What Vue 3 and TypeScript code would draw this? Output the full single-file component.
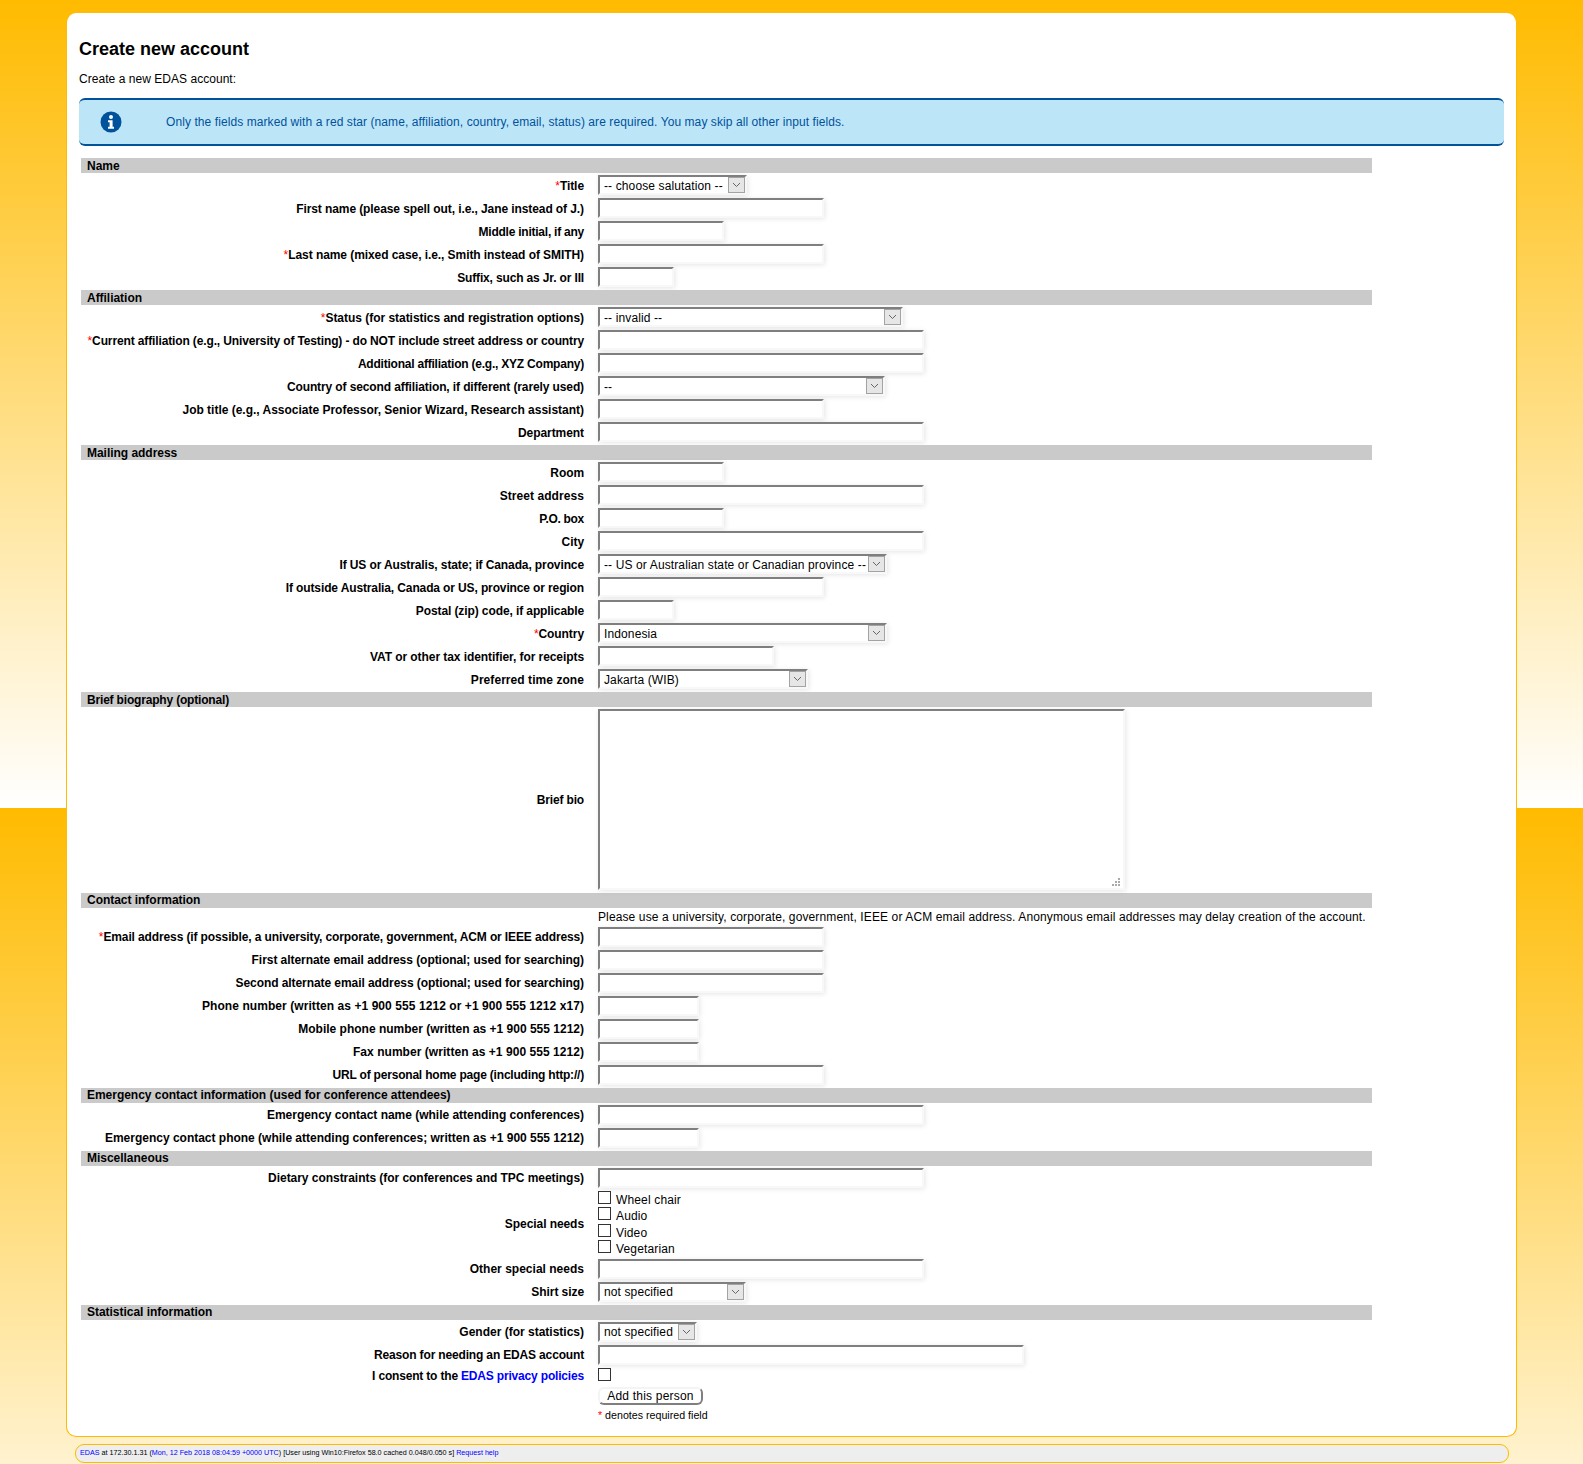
<script setup lang="ts">
type Row =
  | { kind: 'bar'; label: string; ls?: number }
  | { kind: 'input'; label: string; w: number; req?: boolean; ls?: number }
  | { kind: 'select'; label: string; w: number; value: string; req?: boolean; ls?: number }
  | { kind: 'bio'; label: string; ls?: number }
  | { kind: 'note'; text: string }
  | { kind: 'needs'; label: string; options: string[] }
  | { kind: 'consent' }
  | { kind: 'submit' }

const rows: Row[] = [
  { kind: 'bar', label: 'Name' },
  { kind: 'select', label: 'Title', w: 149, value: '-- choose salutation --', req: true },
  { kind: 'input', label: 'First name (please spell out, i.e., Jane instead of J.)', w: 226, ls: -0.09 },
  { kind: 'input', label: 'Middle initial, if any', w: 126, ls: -0.24 },
  { kind: 'input', label: 'Last name (mixed case, i.e., Smith instead of SMITH)', w: 226, req: true },
  { kind: 'input', label: 'Suffix, such as Jr. or III', w: 76, ls: -0.15 },
  { kind: 'bar', label: 'Affiliation' },
  { kind: 'select', label: 'Status (for statistics and registration options)', w: 305, value: '-- invalid --', req: true, ls: -0.03 },
  { kind: 'input', label: 'Current affiliation (e.g., University of Testing) - do NOT include street address or country', w: 326, req: true, ls: -0.13 },
  { kind: 'input', label: 'Additional affiliation (e.g., XYZ Company)', w: 326, ls: -0.22 },
  { kind: 'select', label: 'Country of second affiliation, if different (rarely used)', w: 287, value: '--', ls: -0.11 },
  { kind: 'input', label: 'Job title (e.g., Associate Professor, Senior Wizard, Research assistant)', w: 226, ls: -0.01 },
  { kind: 'input', label: 'Department', w: 326 },
  { kind: 'bar', label: 'Mailing address' },
  { kind: 'input', label: 'Room', w: 126 },
  { kind: 'input', label: 'Street address', w: 326, ls: 0.07 },
  { kind: 'input', label: 'P.O. box', w: 126, ls: -0.3 },
  { kind: 'input', label: 'City', w: 326 },
  { kind: 'select', label: 'If US or Australis, state; if Canada, province', w: 289, value: '-- US or Australian state or Canadian province --', ls: -0.11 },
  { kind: 'input', label: 'If outside Australia, Canada or US, province or region', w: 226, ls: -0.125 },
  { kind: 'input', label: 'Postal (zip) code, if applicable', w: 76, ls: -0.1 },
  { kind: 'select', label: 'Country', w: 289, value: 'Indonesia', req: true },
  { kind: 'input', label: 'VAT or other tax identifier, for receipts', w: 176 },
  { kind: 'select', label: 'Preferred time zone', w: 210, value: 'Jakarta (WIB)', ls: 0.06 },
  { kind: 'bar', label: 'Brief biography (optional)', ls: -0.18 },
  { kind: 'bio', label: 'Brief bio', ls: -0.17 },
  { kind: 'bar', label: 'Contact information', ls: -0.03 },
  { kind: 'note', text: 'Please use a university, corporate, government, IEEE or ACM email address. Anonymous email addresses may delay creation of the account.' },
  { kind: 'input', label: 'Email address (if possible, a university, corporate, government, ACM or IEEE address)', w: 226, req: true, ls: -0.12 },
  { kind: 'input', label: 'First alternate email address (optional; used for searching)', w: 226, ls: -0.05 },
  { kind: 'input', label: 'Second alternate email address (optional; used for searching)', w: 226 },
  { kind: 'input', label: 'Phone number (written as +1 900 555 1212 or +1 900 555 1212 x17)', w: 101, ls: 0.07 },
  { kind: 'input', label: 'Mobile phone number (written as +1 900 555 1212)', w: 101, ls: 0 },
  { kind: 'input', label: 'Fax number (written as +1 900 555 1212)', w: 101, ls: 0.05 },
  { kind: 'input', label: 'URL of personal home page (including http://)', w: 226, ls: -0.2 },
  { kind: 'bar', label: 'Emergency contact information (used for conference attendees)' },
  { kind: 'input', label: 'Emergency contact name (while attending conferences)', w: 326, ls: -0.02 },
  { kind: 'input', label: 'Emergency contact phone (while attending conferences; written as +1 900 555 1212)', w: 101, ls: -0.01 },
  { kind: 'bar', label: 'Miscellaneous' },
  { kind: 'input', label: 'Dietary constraints (for conferences and TPC meetings)', w: 326, ls: -0.04 },
  { kind: 'needs', label: 'Special needs', options: ['Wheel chair', 'Audio', 'Video', 'Vegetarian'] },
  { kind: 'input', label: 'Other special needs', w: 326, ls: 0.01 },
  { kind: 'select', label: 'Shirt size', w: 148, value: 'not specified' },
  { kind: 'bar', label: 'Statistical information', ls: -0.03 },
  { kind: 'select', label: 'Gender (for statistics)', w: 99, value: 'not specified', ls: 0 },
  { kind: 'input', label: 'Reason for needing an EDAS account', w: 426, ls: -0.16 },
  { kind: 'consent' },
  { kind: 'submit' }
]

// The rows up to the biography bar sit one pixel lower in their line.
const lowUntil = rows.findIndex((r) => r.kind === 'bio')

const spacing = (ls?: number) => (ls === undefined ? undefined : { letterSpacing: ls + 'px' })
</script>

<template>
  <div class="page">
    <main class="card">
      <h1>Create new account</h1>
      <p class="intro">Create a new EDAS account:</p>
      <div class="alert">
        <svg class="alert-icon" width="22" height="22" viewBox="0 0 22 22">
          <circle cx="11" cy="11" r="10.5" fill="#00529b" />
          <circle cx="11" cy="6" r="2" fill="#fff" />
          <path d="M8 9.2h4.6v6.6H14v2H8v-2h1.6v-4.6H8z" fill="#fff" />
        </svg>
        <span>Only the fields marked with a red star (name, affiliation, country, email, status) are required. You may skip all other input fields.</span>
      </div>

      <form class="form" @submit.prevent>
        <template v-for="(row, i) in rows" :key="i">
          <div v-if="row.kind === 'bar'" class="bar" :class="{ low: i < lowUntil }" :style="spacing(row.ls)">{{ row.label }}</div>

          <div v-else-if="row.kind === 'input'" class="row" :class="{ low: i < lowUntil }">
            <label class="label" :style="spacing(row.ls)"><span v-if="row.req" class="star">*</span>{{ row.label }}</label>
            <div><input class="text" type="text" :style="{ width: row.w + 'px' }" /></div>
          </div>

          <div v-else-if="row.kind === 'select'" class="row" :class="{ low: i < lowUntil }">
            <label class="label" :style="spacing(row.ls)"><span v-if="row.req" class="star">*</span>{{ row.label }}</label>
            <div>
              <div class="select" :style="{ width: row.w + 'px' }">
                <span class="select-value">{{ row.value }}</span>
                <span class="select-arrow">
                  <svg width="9" height="6" viewBox="0 0 9 6"><path d="M1 1l3.5 3.5L8 1" fill="none" stroke="#666" stroke-width="1" /></svg>
                </span>
              </div>
            </div>
          </div>

          <div v-else-if="row.kind === 'bio'" class="row row-bio">
            <label class="label" :style="spacing(row.ls)">{{ row.label }}</label>
            <div class="bio-wrap">
              <textarea class="bio"></textarea>
              <svg class="grip" width="8" height="8" viewBox="0 0 8 8" fill="#aaa">
                <rect x="6" y="0" width="2" height="2" />
                <rect x="3" y="3" width="2" height="2" />
                <rect x="6" y="3" width="2" height="2" />
                <rect x="0" y="6" width="2" height="2" />
                <rect x="3" y="6" width="2" height="2" />
                <rect x="6" y="6" width="2" height="2" />
              </svg>
            </div>
          </div>

          <div v-else-if="row.kind === 'note'" class="row row-note">
            <span></span>
            <div class="note">{{ row.text }}</div>
          </div>

          <div v-else-if="row.kind === 'needs'" class="row row-needs">
            <label class="label">{{ row.label }}</label>
            <div class="needs">
              <label v-for="o in row.options" :key="o" class="need">
                <input class="check" type="checkbox" /><span>{{ o }}</span>
              </label>
            </div>
          </div>

          <div v-else-if="row.kind === 'consent'" class="row row-consent">
            <label class="label consent">I consent to the <a href="#">EDAS privacy policies</a></label>
            <div><input class="check" type="checkbox" /></div>
          </div>

          <div v-else class="row-submit">
            <button class="submit" type="submit">Add this person</button>
            <div class="legend"><span class="star">*</span> denotes required field</div>
          </div>
        </template>
      </form>
    </main>

    <footer class="foot">
      <a href="#">EDAS</a> at 172.30.1.31 (<a href="#">Mon, 12 Feb 2018 08:04:59 +0000 UTC</a>) [User using Win10:Firefox 58.0 cached 0.048/0.050 s] <a href="#">Request help</a>
    </footer>
  </div>
</template>

<style scoped>
.page {
  box-sizing: border-box;
  height: 1464px;
  padding-top: 12px;
  overflow: hidden;
  background-image: linear-gradient(#ffbb00, #ffffff);
  background-size: 100% 808px;
  background-repeat: repeat;
  font-family: "Liberation Sans", Arial, sans-serif;
  font-size: 12px;
  color: #000;
}
.card {
  box-sizing: border-box;
  width: 1451px;
  height: 1425px;
  margin-left: 66px;
  padding: 0 12px;
  background: #fff;
  border: 1px solid #ffbb00;
  border-top-color: transparent;
  border-radius: 10px;
  background-clip: padding-box;
}
h1 {
  margin: 26px 0 0;
  font-size: 18px;
  line-height: 21px;
  font-weight: bold;
}
.intro {
  margin: 12px 0 0;
  line-height: 14px;
  letter-spacing: 0.04px;
}
.alert {
  box-sizing: border-box;
  display: flex;
  align-items: center;
  height: 48px;
  margin-top: 12px;
  padding-left: 21px;
  background: #bde5f8;
  color: #00529b;
  border-top: 2px solid #00529b;
  border-bottom: 2px solid #00529b;
  border-radius: 6px;
  letter-spacing: 0.08px;
}
.alert-icon {
  flex: none;
  margin-right: 44px;
}
.form {
  display: flex;
  flex-direction: column;
  gap: 2px;
  width: 1291px;
  margin: 12px 0 0 2px;
}
.bar {
  height: 15px;
  line-height: 15px;
  padding-left: 6px;
  background: #cacaca;
  font-weight: bold;
  letter-spacing: -0.03px;
}
.bar.low {
  line-height: 17px;
}
.row {
  display: grid;
  grid-template-columns: 503px 1fr;
  column-gap: 14px;
  height: 21px;
  align-items: start;
}
.label {
  display: block;
  text-align: right;
  font-weight: bold;
  line-height: 21px;
  white-space: nowrap;
  letter-spacing: -0.07px;
}
.row.low .label {
  line-height: 23px;
}
.row.low .select-value {
  padding-top: 2px;
}
.label.consent {
  letter-spacing: -0.18px;
}
.star { color: #f00; font-weight: normal; }
a { color: #00f; text-decoration: none; }
.text,
.select,
.bio {
  box-sizing: border-box;
  border-width: 2px;
  border-style: solid;
  border-color: #7f7f7f #f8f8f8 #f8f8f8 #7f7f7f;
  box-shadow: 1px 1px 5px rgba(0, 0, 0, 0.1);
  background: #fff;
  outline: none;
  padding: 0;
  margin: 0;
}
.text {
  display: block;
  height: 20px;
}
.select {
  display: flex;
  height: 20px;
  align-items: center;
  justify-content: space-between;
  padding-left: 4px;
  line-height: 16px;
  white-space: nowrap;
  letter-spacing: 0.12px;
}
.select-arrow {
  box-sizing: border-box;
  flex: none;
  display: flex;
  align-items: center;
  justify-content: center;
  width: 17px;
  height: 16px;
  border: 1px solid #a3a3a3;
  background: #e6e6e6;
}
.row-bio {
  height: 182px;
}
.row-bio .label {
  line-height: 182px;
}
.bio-wrap {
  position: relative;
  width: 527px;
}
.bio {
  display: block;
  width: 527px;
  height: 181px;
  resize: none;
}
.grip {
  position: absolute;
  right: 5px;
  bottom: 4px;
}
.row-note {
  height: 15px;
}
.note {
  line-height: 15px;
  white-space: nowrap;
  letter-spacing: 0.12px;
}
.row-needs {
  height: 66px;
  align-items: center;
}
.needs {
  display: flex;
  flex-direction: column;
}
.need {
  display: flex;
  align-items: flex-start;
  height: 16px;
  letter-spacing: 0.15px;
}
.need:nth-child(even) {
  height: 17px;
}
.need span {
  margin: 2px 0 0 5px;
  line-height: 15px;
}
.check {
  appearance: none;
  display: block;
  box-sizing: border-box;
  width: 13px;
  height: 13px;
  margin: 0;
  background: #fff;
  border: 1px solid #333;
}
.row-consent {
  height: 15px;
}
.row-consent .label {
  line-height: 17px;
}
.row-submit {
  padding-left: 517px;
  padding-top: 2px;
}
.submit {
  box-sizing: border-box;
  display: block;
  width: 105px;
  height: 18px;
  padding: 0;
  font: 12px "Liberation Sans", Arial, sans-serif;
  letter-spacing: 0.2px;
  color: #000;
  background: #fff;
  border-width: 2px;
  border-style: solid;
  border-color: #f4f4f4 #7f7f7f #7f7f7f #f4f4f4;
  border-radius: 6px;
}
.legend {
  margin-top: 3px;
  font-size: 10.67px;
  line-height: 14px;
}
.foot {
  box-sizing: border-box;
  width: 1434px;
  height: 19px;
  margin: 7px 0 0 75px;
  padding-left: 4px;
  background: #eeeeee;
  border: 1px solid #ffbb00;
  border-radius: 9px;
  font-size: 7.18px;
  line-height: 17px;
  white-space: nowrap;
}
</style>
